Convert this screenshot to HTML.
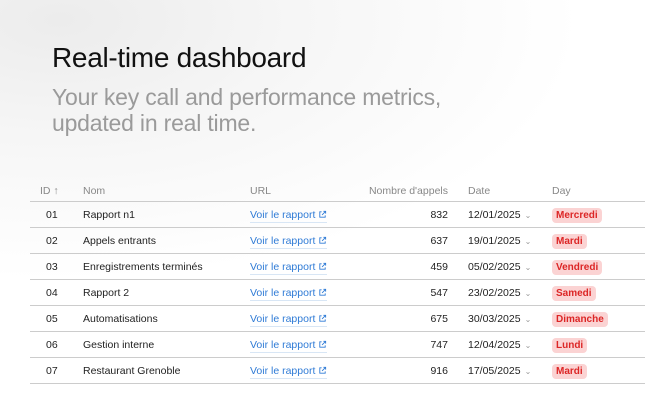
<!DOCTYPE html>
<html><head><style>
html,body{margin:0;padding:0}
body{width:663px;height:413px;overflow:hidden;font-family:"Liberation Sans",sans-serif;background:radial-gradient(ellipse 520px 260px at 60px 20px,#ececec 0%,#f6f6f6 45%,#fff 100%);position:relative}
h1{position:absolute;left:52px;top:42px;margin:0;font-size:28px;font-weight:400;color:#111;letter-spacing:-0.3px}
.sub{position:absolute;left:52px;top:84px;margin:0;font-size:23px;line-height:26px;color:#9a9a9a;letter-spacing:-0.2px}
.hdr,.row{position:absolute;left:30px;width:615px;font-size:10.5px}
.hdr{top:182px;height:19px;color:#888;border-bottom:1.5px solid #ccc}
.row{height:25px;border-bottom:1.5px solid #ccc;color:#222}
.c{position:absolute;top:0;line-height:19px}
.row .c{line-height:26px}
.num{width:80px;text-align:right}
.link{color:#2f7bd6}
.link span{border-bottom:1px solid #d8e6f5;padding-bottom:1px}
.badge{display:inline-block;background:#fbd3d3;color:#dc2626;font-weight:700;padding:0 4px;line-height:15px;border-radius:4px;font-size:10px}
.chev{color:#999;font-size:8px;margin-left:4px}
</style></head><body>
<h1>Real-time dashboard</h1>
<p class="sub">Your key call and performance metrics,<br>updated in real time.</p>
<div class="hdr">
<div class="c" style="left:10px">ID ↑</div>
<div class="c" style="left:53px">Nom</div>
<div class="c" style="left:220px">URL</div>
<div class="c num" style="left:338px">Nombre d'appels</div>
<div class="c" style="left:438px">Date</div>
<div class="c" style="left:522px">Day</div>
</div>
<div id="rows"></div>
<script>
var d=[["01","Rapport n1","832","12/01/2025","Mercredi"],["02","Appels entrants","637","19/01/2025","Mardi"],["03","Enregistrements terminés","459","05/02/2025","Vendredi"],["04","Rapport 2","547","23/02/2025","Samedi"],["05","Automatisations","675","30/03/2025","Dimanche"],["06","Gestion interne","747","12/04/2025","Lundi"],["07","Restaurant Grenoble","916","17/05/2025","Mardi"]];
var h="";
d.forEach(function(r,i){h+='<div class="row" style="top:'+(202+i*26)+'px"><div class="c" style="left:16px">'+r[0]+'</div><div class="c" style="left:53px">'+r[1]+'</div><div class="c link" style="left:220px"><span>Voir le rapport <svg width="9" height="9" viewBox="0 0 10 10" style="vertical-align:-1px"><path d="M4 2H2v6h6V6M6 1.5h2.5V4M8.5 1.5L4.5 5.5" fill="none" stroke="#2f7bd6" stroke-width="1"/></svg></span></div><div class="c num" style="left:338px">'+r[2]+'</div><div class="c" style="left:438px">'+r[3]+'<span class="chev">&#8964;</span></div><div class="c" style="left:522px"><span class="badge">'+r[4]+'</span></div></div>'});
document.getElementById("rows").innerHTML=h;
</script>
</body></html>
